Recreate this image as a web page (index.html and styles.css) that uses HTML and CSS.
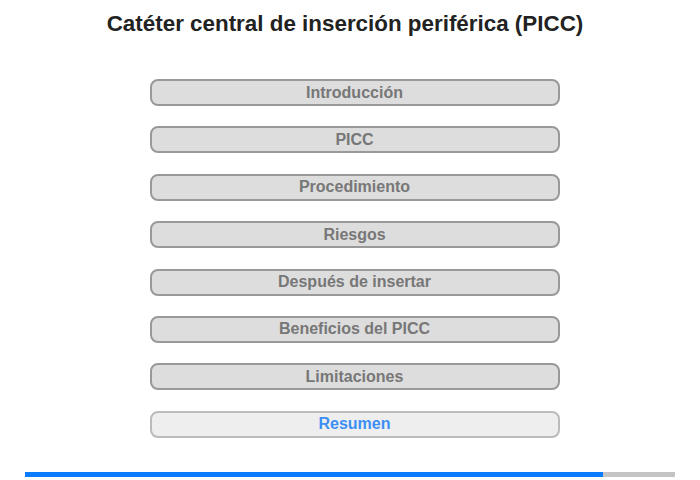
FILE: index.html
```html
<!DOCTYPE html>
<html lang="es">
<head>
    <meta charset="UTF-8">
    <meta name="viewport" content="width=device-width, initial-scale=1.0">
    <title>Catéter central de inserción periférica (PICC)</title>
    <link rel="stylesheet" href="styles.css">
</head>
<body>
    <div class="page">
        <h1>Catéter central de inserción periférica (PICC)</h1>
        <div class="menu">
            <button class="item">Introducción</button>
            <button class="item">PICC</button>
            <button class="item">Procedimiento</button>
            <button class="item">Riesgos</button>
            <button class="item">Después de insertar</button>
            <button class="item">Beneficios del PICC</button>
            <button class="item">Limitaciones</button>
            <button class="item current">Resumen</button>
        </div>
        <div class="progress">
            <div class="progress-fill" style="width: 88.9%;"></div>
        </div>
    </div>
</body>
</html>
```

FILE: styles.css
```css
body {
    margin: 0;
    font-family: "Liberation Sans", Arial, sans-serif;
    background-color: #fff;
}
.page {
    width: 700px;
    height: 480px;
    display: flex;
    flex-direction: column;
    align-items: center;
}
h1 {
    margin: 10px 0 0 -10px;
    font-size: 22.4px;
    font-weight: bold;
    color: #222;
    line-height: 27px;
}
.menu {
    margin-top: 42px;
    margin-left: 9px;
    width: 410px;
    display: flex;
    flex-direction: column;
    gap: 20.4px;
}
.item {
    height: 27px;
    padding: 0;
    border: 2px solid #999;
    border-radius: 8px;
    background-color: #ddd;
    color: #777;
    font-family: "Liberation Sans", Arial, sans-serif;
    font-size: 16px;
    font-weight: bold;
    cursor: pointer;
}
.item.current {
    background-color: #eee;
    border-color: #bbb;
    color: #3d8ef5;
}
.progress {
    margin-top: 34px;
    width: 650px;
    height: 5px;
    background-color: #c4c4c4;
}
.progress-fill {
    height: 100%;
    background-color: #0a7cff;
}
```
